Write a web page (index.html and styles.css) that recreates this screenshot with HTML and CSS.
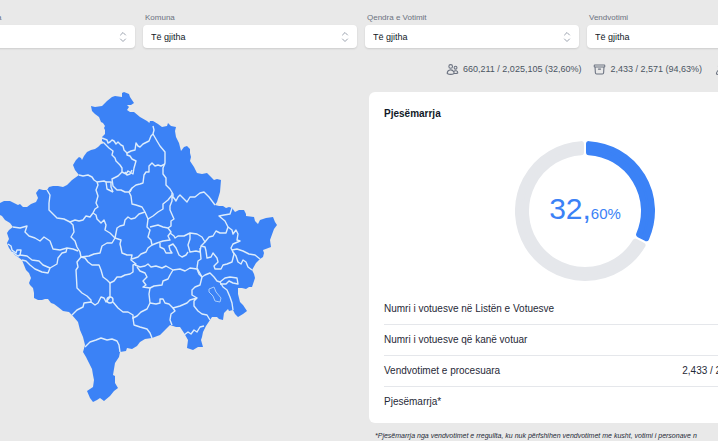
FILE: index.html
```html
<!DOCTYPE html>
<html lang="sq">
<head>
<meta charset="utf-8">
<meta name="viewport" content="width=device-width, initial-scale=1">
<title>Pjesëmarrja</title>
<link rel="stylesheet" href="styles.css">
</head>
<body>
<main class="page">
  <form class="filters">
    <div class="field">
      <label for="f1">a</label>
      <div class="picker">
        <select id="f1"><option></option></select>
        <svg class="chevrons" viewBox="0 0 8 12"><path d="M1.500 4 4 1.500 6.500 4M1.500 8 4 10.500 6.500 8"/></svg>
      </div>
    </div>
    <div class="field">
      <label for="f2">Komuna</label>
      <div class="picker">
        <select id="f2"><option>Të gjitha</option></select>
        <svg class="chevrons" viewBox="0 0 8 12"><path d="M1.500 4 4 1.500 6.500 4M1.500 8 4 10.500 6.500 8"/></svg>
      </div>
    </div>
    <div class="field">
      <label for="f3">Qendra e Votimit</label>
      <div class="picker">
        <select id="f3"><option>Të gjitha</option></select>
        <svg class="chevrons" viewBox="0 0 8 12"><path d="M1.500 4 4 1.500 6.500 4M1.500 8 4 10.500 6.500 8"/></svg>
      </div>
    </div>
    <div class="field">
      <label for="f4">Vendvotimi</label>
      <div class="picker">
        <select id="f4"><option>Të gjitha</option></select>
      </div>
    </div>
  </form>

  <div class="stats">
    <span class="stat">
      <svg viewBox="0 0 24 24"><path d="M15 19.128a9.380 9.380 0 0 0 2.625.372 9.337 9.337 0 0 0 4.121-.952 4.125 4.125 0 0 0-7.533-2.493M15 19.128v-.003c0-1.113-.285-2.160-.786-3.070M15 19.128v.106A12.318 12.318 0 0 1 8.624 21c-2.331 0-4.512-.645-6.374-1.766v-.109a6.375 6.375 0 0 1 11.964-3.070M12 6.375a3.375 3.375 0 1 1-6.750 0 3.375 3.375 0 0 1 6.750 0Zm8.250 2.250a2.625 2.625 0 1 1-5.250 0 2.625 2.625 0 0 1 5.250 0Z"/></svg>
      660,211 / 2,025,105 (32,60%)
    </span>
    <span class="stat">
      <svg viewBox="0 0 24 24"><path d="m20.250 7.500-.625 10.632a2.250 2.250 0 0 1-2.247 2.118H6.622a2.250 2.250 0 0 1-2.247-2.118L3.750 7.500M10 11.250h4M3.375 7.500h17.250c.621 0 1.125-.504 1.125-1.125v-1.500c0-.621-.504-1.125-1.125-1.125H3.375c-.621 0-1.125.504-1.125 1.125v1.500c0 .621.504 1.125 1.125 1.125Z"/></svg>
      2,433 / 2,571 (94,63%)
    </span>
    <span class="stat">
      <svg viewBox="0 0 24 24"><path d="M15.750 6a3.750 3.750 0 1 1-7.500 0 3.750 3.750 0 0 1 7.500 0ZM4.501 20.118a7.500 7.500 0 0 1 14.998 0A17.933 17.933 0 0 1 12 21.750c-2.676 0-5.216-.584-7.499-1.632Z"/></svg>
    </span>
  </div>

  <div class="content">
    <svg class="map" viewBox="-8 92 290 320" role="img" aria-label="Komuna">
      <path class="land" d="M0 203 4 201 10 201 14 203 18 205 20 204 23 207 27 207 31 204 36 202 38 198 36 193 39 189 43 190 47 190 49 187 53 186 58 186 63 187 67 185 72 180 79 175 75 170 73 165 76 160 79 157 81 158 82 160 84 156 87 152 91 150 95 149 98 147 101 144 105 143 102 141 102 137 105 134 105 130 104 128 105 126 103 123 101 122 99 117 95 114 92 111 91 106 95 107 102 106 107 101 112 97 115 96 122 97 122 93 124 92 129 94 130 97 134 103 131 105 127 105 129 107 127 110 130 112 134 112 140 117 147 121 153 126 149 124 150 121 153 121 158 124 162 127 167 126 168 123 171 126 176 127 175 131 176 137 179 143 181 151 184 147 187 146 190 149 190 153 191 157 190 161 194 167 197 173 202 174 207 173 211 177 214 180 217 179 221 180 220 192 217 202 215 205 219 206 223 206 226 208 229 207 232 208 235 212 239 210 244 210 246 214 246 216 254 217 255 221 258 224 260 220 266 218 273 217 275 222 277 225 274 229 270 240 271 247 263 250 264 253 263 257 260 259 256 263 252 270 254 274 255 278 252 287 249 287 246 289 242 288 238 288 238 294 240 302 243 305 247 311 243 314 238 317 235 314 233 310 229 311 228 309 226 311 224 313 223 320 219 319 217 317 212 317 210 320 206 326 203 332 202 337 201 340 203 347 198 347 193 350 187 348 188 340 184 333 180 327 176 327 170 325 166 329 160 335 152 338 145 339 140 342 137 346 132 349 127 348 126 351 120 352 119 357 115 363 114 369 113 375 115 376 115 383 118 388 114 391 110 396 104 401 100 398 97 400 93 402 90 398 87 391 90 389 93 387 94 380 93 375 92 369 89 363 86 357 83 352 85 345 83 337 80 330 78 322 72 315 69 312 63 311 58 307 54 304 51 303 48 299 45 299 42 300 38 300 34 298 34 293 33 288 30 285 29 283 31 278 29 273 26 270 24 265 22 260 18 257 15 255 12 252 9 248 7 243 9 239 7 233 9 230 13 227 10 223 5 220 2 216 0 215-1 209Z"/>
      <g class="borders">
        <path d="M102 138 107 140 108 143 110 142 112 140 114 141 116 144 118 142 121 145 123 146 124 150 127 153 131 151 135 150 136 143 138 146 140 147 143 144 149 141 151 136 153 134 154 130 153 126"/>
        <path d="M153 134 157 141 160 146 165 152 165 163 163 168 163 174 166 178 166 185 170 189 173 194 173 198"/>
        <path d="M165 164 161 166 158 165 155 166 152 163 149 166 149 172 146 172 144 175 143 183 140 184 136 185 132 188 130 192"/>
        <path d="M104 143 109 148 113 151 112 155 115 158 116 161 120 165 122 168 122 172 126 174 128 171 133 174 134 168 136 161 132 159 130 156 127 155 127 153M125 172 127 175 130 174 132 170"/>
        <path d="M122 172 118 176 112 179 113 186 117 190 121 190 125 192 129 192 132 188M113 192 111 187 111 182 106 182"/>
        <path d="M79 175 83 176 88 175 92 177 94 180 97 182 104 181 106 182 107 189 113 192M97 182 98 185 96 190 98 196 96 203 98 207 95 209 93 213"/>
        <path d="M129 192 131 196 132 204 136 205 142 207 145 212 148 219 153 216 158 212 163 209 163 204 168 200 172 195"/>
        <path d="M47 190 50 195 49 203 49 210 53 214 57 218 64 219 70 222 75 220 79 221 83 220 86 216 90 217 93 213"/>
        <path d="M93 213 96 215 97 219 101 223 104 220 106 225 105 230 110 233 115 238 112 243 107 243 102 246 100 253 94 254 89 256 81 257"/>
        <path d="M70 222 73 225 74 232 71 237 75 241 77 247 80 252 81 257"/>
        <path d="M81 257 85 258 88 262 92 265 99 265 101 270 103 277 107 280 110 283 114 281 117 277 121 277 125 275 130 274 133 272 133 265 136 264 131 260 132 255 127 255 122 253 121 248 120 244 121 240 115 238"/>
        <path d="M115 238 117 228 120 226 124 225 125 220 128 217 131 219 135 218 139 214 145 212"/>
        <path d="M148 219 147 227 150 230 148 237 151 240 152 245 148 248 146 252 141 254 138 257 132 259"/>
        <path d="M150 227 154 226 158 225 163 227 168 228 171 226 171 221 174 219 170 210 170 206 172 201 172 193"/>
        <path d="M168 228 171 232 168 236 170 240 163 241 157 243 152 245"/>
        <path d="M172 197 174 198 176 201 178 197 180 195 184 199 187 202 190 197 195 197 200 193 204 192 209 197 215 205"/>
        <path d="M170 233 174 236 175 238 178 236 184 236 190 233 197 234 202 237 205 242 201 246 200 252 196 251 190 252 188 245 190 239 190 233"/>
        <path d="M160 243 160 247 164 249 166 253 172 253 170 250 169 246 173 244 176 248 179 255 182 257 186 255 188 252"/>
        <path d="M205 242 209 237 213 236 216 231 220 233 226 233 228 227 225 221 219 216 224 215 230 214 232 208"/>
        <path d="M228 227 232 230 233 234 236 230 238 234 237 240 240 241 233 244 231 248 234 254 232 262 227 264 223 265 221 269 215 269 214 266 218 262 217 258 213 253 211 257 207 258 206 251 205 247 201 246"/>
        <path d="M232 250 237 249 243 251 249 254 255 255 260 259M233 252 236 256 238 262 241 264 243 260 246 262 248 267 252 270"/>
        <path d="M200 248 201 259 198 261 197 268 202 277 205 275 210 273 214 277 217 281 220 282 223 287 227 290 230 297 232 303 233 310"/>
        <path d="M220 282 225 278 230 277 237 278 238 284 233 283 229 281 226 284 220 284M202 277 200 285 195 287 192 290 192 295 197 298"/>
        <path d="M135 265 140 267 145 266 148 264 151 267 156 266 162 268 166 266 173 270 180 269 185 271 190 268 197 269M197 269 199 274 202 277"/>
        <path d="M137 267 140 271 145 273 147 277 143 281 146 285 143 287 150 288 154 286 162 285 163 281 168 279 170 275 173 270"/>
        <path d="M150 288 149 294 150 303 147 309 141 312 137 316 133 318 134 325 140 327 147 329 150 333 152 338"/>
        <path d="M150 303 156 304 160 303 160 299 163 299 165 303 169 304 173 308 180 306 187 303 190 300 197 298 194 301 194 306 198 311 202 314 207 315 210 320"/>
        <path d="M173 308 175 311 171 314 170 320 172 325M184 335 188 332 191 334 194 330 197 332 200 327 204 326"/>
        <path class="fine" d="M209 289 214 287 216 292 221 298 220 302 215 301 213 296 209 292Z"/>
        <path d="M85 347 90 342 96 340 101 338 107 340 112 339 117 341 119 345 120 352"/>
        <path d="M72 315 77 310 83 307 84 303 91 302 95 305 98 303 101 297 104 298 106 302 110 297M113 302 118 308 123 312 128 312 133 315 133 319"/>
        <circle cx="110" cy="300" r="3"/>
        <path d="M110 283 110 297M81 257 77 262 78 267 76 270 77 288 82 293 87 296 91 300 91 302"/>
        <path d="M13 227 20 228 27 226 25 232 29 236 35 238 40 241 44 237 50 241 53 249 60 250 67 248 73 249 78 251"/>
        <path d="M8 244 11 246 12 250 16 253 17 250 21 250 20 255 27 256 32 260 39 261 43 265 50 268 57 264 58 258 62 253 66 252 67 248"/>
        <path d="M22 260 26 261 30 265 35 269 42 272 48 273 50 268M12 252 18 256 20 255"/>
      </g>
    </svg>

    <section class="side">
      <div class="panel">
        <h1>Pjesëmarrja</h1>
        <div class="donut">
          <svg viewBox="-70 -70 140 140">
            <path class="rest" d="M57.550 34.290A67 67 0 1 1-4-66.880L-4-58.860A59 59 0 1 0 50.430 30.600Z"/>
            <path class="voted" d="M4-66.880A67 67 0 0 1 61.230 27.190L54.110 23.500A59 59 0 0 0 4-58.860Z"/>
          </svg>
          <p class="figure">32,<small>60%</small></p>
        </div>
        <table>
          <tr><th scope="row">Numri i votuesve në Listën e Votuesve</th><td></td></tr>
          <tr><th scope="row">Numri i votuesve që kanë votuar</th><td></td></tr>
          <tr><th scope="row">Vendvotimet e procesuara</th><td>2,433 / 2,571 (94,63%)</td></tr>
          <tr><th scope="row">Pjesëmarrja*</th><td></td></tr>
        </table>
      </div>
      <p class="note">*Pjesëmarrja nga vendvotimet e rregullta, ku nuk përfshihen vendvotimet me kusht, votimi i personave n</p>
    </section>
  </div>
</main>
</body>
</html>
```
FILE: styles.css
```css
* {
  box-sizing: border-box;
}

body {
  margin: 0;
  background: #e9e9e9;
  color: #1f2937;
  font-family: "Liberation Sans", Arial, sans-serif;
  font-size: 10px;
  overflow: hidden;
}

/* The dashboard is wider than the window on both sides */
.page {
  margin: 0 -83px 0 -8px;
  padding-top: 13px;
}

.filters {
  display: grid;
  grid-template-columns: 143fr 214fr 214fr 214fr;
  gap: 8px;
}

.field label {
  display: block;
  padding-left: 2px;
  margin-bottom: 2px;
  color: #6b7280;
  font-size: 8px;
  line-height: 10px;
}

.field:first-child label {
  padding-left: 5px;
}

.picker {
  display: grid;
  align-items: center;
}

.picker > * {
  grid-area: 1 / 1;
}

.picker select {
  appearance: none;
  width: 100%;
  height: 23px;
  padding: 0 8px;
  border: 0;
  border-radius: 4px;
  background: #fff;
  box-shadow: 0 1px 2px rgb(0 0 0 / 12%);
  color: #111827;
  font: 9px "Liberation Sans", Arial, sans-serif;
}

.chevrons {
  justify-self: end;
  width: 8px;
  height: 12px;
  margin-right: 8px;
  fill: none;
  stroke: #9ca3af;
  stroke-linecap: round;
  stroke-linejoin: round;
  pointer-events: none;
}

.stats {
  display: flex;
  gap: 12px;
  margin: 14px 0 16px;
  padding-left: 454px;
  color: #4b5563;
  font-size: 9px;
  line-height: 14px;
  white-space: nowrap;
}

.stat {
  display: flex;
  align-items: center;
  gap: 4px;
}

.stat svg {
  width: 13px;
  height: 13px;
  fill: none;
  stroke: #6b7280;
  stroke-width: 2;
  stroke-linecap: round;
  stroke-linejoin: round;
}

.content {
  display: grid;
  grid-template-columns: 377fr 432fr;
}

.map {
  width: 290px;
  height: 320px;
}

.land {
  fill: #3b82f6;
}

.borders {
  fill: none;
  stroke: #dcecfc;
  stroke-width: 1.400;
  stroke-linejoin: round;
}

.borders .fine {
  stroke: #a9cdfb;
  stroke-width: 1;
}

.panel {
  padding: 15px 15px 6px;
  border-radius: 6px;
  background: #fff;
}

h1 {
  margin: 0 0 20px;
  color: #111827;
  font-size: 10px;
  line-height: 14px;
}

.donut {
  display: grid;
  place-items: center;
  margin-bottom: 12px;
}

.donut > * {
  grid-area: 1 / 1;
}

.donut svg {
  width: 140px;
  height: 140px;
}

.rest,
.voted {
  stroke-width: 6;
  stroke-linejoin: round;
}

.rest {
  fill: #e5e7eb;
  stroke: #e5e7eb;
}

.voted {
  fill: #3b82f6;
  stroke: #3b82f6;
}

.figure {
  margin: 0;
  color: #3b82f6;
  font-size: 30px;
  line-height: 36px;
}

.figure small {
  font-size: 15px;
}

table {
  width: 100%;
  border-collapse: collapse;
}

th,
td {
  height: 31px;
  padding: 0;
  font-weight: 400;
  text-align: left;
}

td {
  padding-right: 2px;
  text-align: right;
}

tr + tr {
  border-top: 1px solid #e5e7eb;
}

.note {
  margin: 8px 0 0 6px;
  font-size: 7px;
  font-style: italic;
  line-height: 10px;
  white-space: nowrap;
}
```
